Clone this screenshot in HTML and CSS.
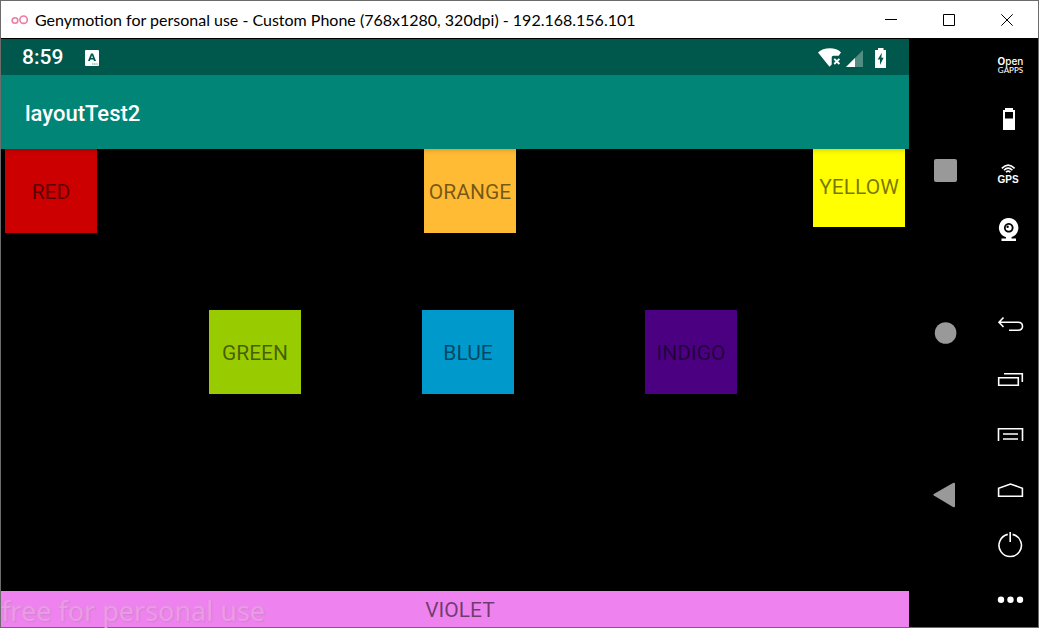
FILE: index.html
```html
<!DOCTYPE html>
<html lang="en">
<head>
<meta charset="utf-8">
<title>Genymotion for personal use</title>
<link rel="stylesheet" href="styles.css">
</head>
<body>
<div class="window">
  <header class="titlebar">
    <svg class="titlebar-logo" viewBox="0 0 18 12" aria-hidden="true"><circle cx="4" cy="6.5" r="2.8"/><circle cx="12.6" cy="5.7" r="3.7"/></svg>
    <h1 class="titlebar-text">Genymotion for personal use - Custom Phone (768x1280, 320dpi) - 192.168.156.101</h1>
    <div class="window-controls">
      <button class="window-button" aria-label="Minimize"><svg viewBox="0 0 12 12"><path d="M0 5.5H12"/></svg></button>
      <button class="window-button" aria-label="Maximize"><svg viewBox="0 0 12 12"><path d="M.5 .5H11.5V11.5H.5Z"/></svg></button>
      <button class="window-button" aria-label="Close"><svg viewBox="0 0 12 12"><path d="M.3 .3L11.7 11.7M11.7 .3L.3 11.7"/></svg></button>
    </div>
  </header>
  <main class="device">
    <section class="screen">
      <div class="statusbar">
        <span class="clock">8:59</span>
        <svg class="notice" viewBox="0 0 16 16" aria-hidden="true"><rect x="1" y="0" width="14" height="16" rx="1" fill="#fff"/><path d="M4 11L7 3.5H9L12 11H10L9.4 9.4H6.5L5.9 11ZM7.1 7.9H8.9L8 5.3Z" fill="#00574b" fill-rule="evenodd"/><path d="M8 14H14" stroke="#00574b" stroke-dasharray="1.5 .7" opacity=".6"/></svg>
        <div class="status-icons">
          <svg class="wifi" viewBox="0 0 24 20" aria-hidden="true"><path d="M0 4.6C5-.8 18-1.2 23 4.4L20.7 7.8H15.6C14.4 7.8 13.7 8.5 13.7 9.7V16.4L11.5 18.8Z" fill="#fff"/><path d="M16.2 10.8L21.4 16M21.4 10.8L16.2 16" stroke="#fff" stroke-width="1.9"/></svg>
          <svg class="signal" viewBox="0 0 18 20" aria-hidden="true"><path d="M17 2V19H0Z" fill="#fff" opacity=".32"/><path d="M9 10V19H0Z" fill="#fff"/></svg>
          <svg class="battery" viewBox="0 0 12 20" aria-hidden="true"><path d="M3 0H8.5V2H11V20H0V2H3Z" fill="#fff"/><path d="M6.8 4.7L2.7 11.4H5V17L8.6 9.8H6.4Z" fill="#00574b"/></svg>
        </div>
      </div>
      <div class="appbar"><h2 class="app-title">layoutTest2</h2></div>
      <div class="layout">
        <div class="row row-top">
          <div class="tile red">RED</div>
          <div class="tile orange">ORANGE</div>
          <div class="tile yellow">YELLOW</div>
        </div>
        <div class="row row-middle">
          <div class="tile green">GREEN</div>
          <div class="tile blue">BLUE</div>
          <div class="tile indigo">INDIGO</div>
        </div>
      </div>
      <div class="violet"><span>VIOLET</span><span class="watermark">free for personal use</span></div>
    </section>
    <nav class="android-nav" aria-label="Android navigation">
      <button class="nav-button" aria-label="Overview"><svg viewBox="0 0 26 26"><rect x="1" y="1" width="23" height="23" rx="2"/></svg></button>
      <button class="nav-button" aria-label="Home"><svg viewBox="0 0 26 26"><circle cx="12.6" cy="13" r="10.8"/></svg></button>
      <button class="nav-button" aria-label="Back"><svg viewBox="0 0 26 26"><path d="M.8 13.5Q-.2 12.8 .8 12L20 1Q22 0 22 2V24Q22 26 20 25Z"/></svg></button>
    </nav>
    <aside class="toolbar" aria-label="Emulator tools">
      <div class="tool-group">
        <button class="tool" aria-label="Open GAPPS"><svg viewBox="0 0 28 28"><text x="14.5" y="14" class="open-label"><tspan class="open-initial">O</tspan>pen</text><text x="14.5" y="22" class="gapps-label">GAPPS</text></svg></button>
        <button class="tool" aria-label="Battery"><svg viewBox="0 0 28 28"><path class="solid" fill-rule="evenodd" d="M9 2H17V4H19V24H7V4H9ZM9 6V12.5H17V6Z"/></svg></button>
        <button class="tool" aria-label="GPS"><svg viewBox="0 0 28 28"><path class="line" d="M5.8 7.4Q12.2 .8 18.6 7.4M8 9.3Q12.2 5 16.4 9.3M10 11.2Q12.2 9 14.4 11.2"/><text x="12" y="22" class="gps-label">GPS</text></svg></button>
        <button class="tool" aria-label="Camera"><svg viewBox="0 0 28 28"><path class="solid" fill-rule="evenodd" d="M12.7 2A9.8 9.8 0 1 1 12.6 2ZM12.7 7A4.8 4.8 0 1 0 12.8 7Z"/><circle class="solid" cx="12.7" cy="11.8" r="3"/><circle cx="11.6" cy="10.7" r="1.2"/><path class="solid" d="M10 20H15.5V22.5H20V25H5.5V22.5H10Z"/></svg></button>
      </div>
      <div class="tool-group">
        <button class="tool" aria-label="Back"><svg viewBox="0 0 28 28"><path class="line" d="M7.5 7.5L3 12.3L7.5 17M3 12.3H22C28 12.3 28 20.2 22 20.2H13"/></svg></button>
        <button class="tool" aria-label="Recent apps"><svg viewBox="0 0 28 28"><path class="line" d="M2.7 12.7H22.3V20.3H2.7ZM8 8.7H26.3V17"/></svg></button>
        <button class="tool" aria-label="Menu"><svg viewBox="0 0 28 28"><path class="line" d="M2.5 21V8.7H26.5V21M7 14H22M7 19H22"/></svg></button>
        <button class="tool" aria-label="Home"><svg viewBox="0 0 28 28"><path class="line" d="M2.6 21.2V13.3L14.5 9L26.4 13.3V21.2Z"/></svg></button>
        <button class="tool" aria-label="Power"><svg viewBox="0 0 28 28"><path class="line" d="M11.8 4.4A11.2 11.2 0 1 0 16.6 4.4M14.2 2V12"/></svg></button>
        <button class="tool" aria-label="More"><svg viewBox="0 0 28 28"><g class="solid"><circle cx="5" cy="14.8" r="3.2"/><circle cx="14.5" cy="14.8" r="3.2"/><circle cx="24" cy="14.8" r="3.2"/></g></svg></button>
      </div>
    </aside>
  </main>
</div>
</body>
</html>
```
FILE: styles.css
```css
* { box-sizing: border-box; }
body { margin: 0; background: #000; }
button { display: grid; place-items: center; margin: 0; padding: 0; border: 0; background: none; color: inherit; }
h1, h2 { margin: 0; }
svg { display: block; }

.window { display: flex; flex-direction: column; min-height: 100vh; border: 1px solid #6b6b6b; background: #000; }

.titlebar { display: flex; align-items: center; height: 37px; padding-left: 10px; background: #fff; color: #000; }
.titlebar-logo { width: 18px; height: 12px; margin-right: 6px; fill: none; stroke: #ed7da0; stroke-width: 1.6; }
.titlebar-text { flex: 1; font: 400 16px/24px Lato, sans-serif; white-space: nowrap; }
.window-controls { display: flex; padding-right: 2px; }
.window-button { width: 58px; height: 36px; }
.window-button svg { width: 12px; height: 12px; fill: none; stroke: #000; }

.device { flex: 1; display: flex; padding-top: 1px; }
.screen { flex: 1; display: flex; flex-direction: column; font-family: Roboto, sans-serif; }

.statusbar { display: flex; align-items: center; height: 36px; padding: 1px 22px 0 21px; background: #00574b; color: #fff; }
.clock { font-size: 21px; font-weight: 500; line-height: 25px; }
.notice { width: 16px; height: 16px; margin-left: 21px; }
.status-icons { display: flex; margin-left: auto; }
.wifi { width: 24px; height: 20px; }
.signal { width: 18px; height: 20px; margin-left: 4px; }
.battery { width: 12px; height: 20px; margin-left: 11px; }

.appbar { display: flex; align-items: center; height: 74px; padding: 4px 24px 0; background: #008577; color: #fff; }
.app-title { font-size: 22px; font-weight: 500; line-height: 28px; }

.layout { flex: 1; display: grid; grid-template-rows: 84px 77fr 84px 197fr; }
.row { display: grid; align-items: start; }
.row-top { grid-row: 1; grid-template-columns: 92px 327fr 92px 297fr 92px; padding: 0 4px; }
.row-middle { grid-row: 3; grid-template-columns: 208fr 92px 121fr 92px 131fr 92px 172fr; }
.tile { display: grid; place-items: center; height: 84px; padding-top: 2px; font-size: 21px; line-height: 26px; color: rgba(0, 0, 0, .54); }
.red { grid-column: 1; background: #c00; }
.orange { grid-column: 3; background: #fb3; }
.yellow { grid-column: 5; height: 78px; padding: 0 0 2px; background: #ff0; }
.green { grid-column: 2; background: #9c0; }
.blue { grid-column: 4; background: #09c; }
.indigo { grid-column: 6; background: #4b0082; }
.row-top .tile { box-shadow: inset 0 5px 4px -3px rgba(0, 0, 0, .15); }

.violet { position: relative; display: grid; place-items: center; height: 36px; padding: 2px 0 0 10px; background: #ee82ee; color: rgba(0, 0, 0, .54); font-size: 21px; line-height: 26px; }
.watermark { position: absolute; left: 0; bottom: 0; font: 400 27px/32px "Noto Sans", sans-serif; color: #ea9be6; text-shadow: 1px 1px 1px rgba(190, 130, 190, .5); white-space: nowrap; }

.android-nav { display: grid; grid-auto-rows: 1fr; width: 73px; padding: 51px 0; }
.nav-button svg { width: 26px; height: 26px; fill: #999; }

.toolbar { display: flex; flex-direction: column; justify-content: space-between; width: 56px; margin: -2px 0 1px; }
.tool { width: 56px; height: 55px; }
.tool svg { width: 28px; height: 28px; }
.solid { fill: #fff; }
.line { fill: none; stroke: #fff; stroke-width: 1.6; }
.open-label, .gapps-label, .gps-label { fill: #fff; text-anchor: middle; }
.open-label { font: 500 10px Inter, sans-serif; }
.open-initial { font-weight: 700; }
.gapps-label { font: 500 8px Lato, sans-serif; }
.gps-label { font: 700 10px "Liberation Sans", sans-serif; }
```
